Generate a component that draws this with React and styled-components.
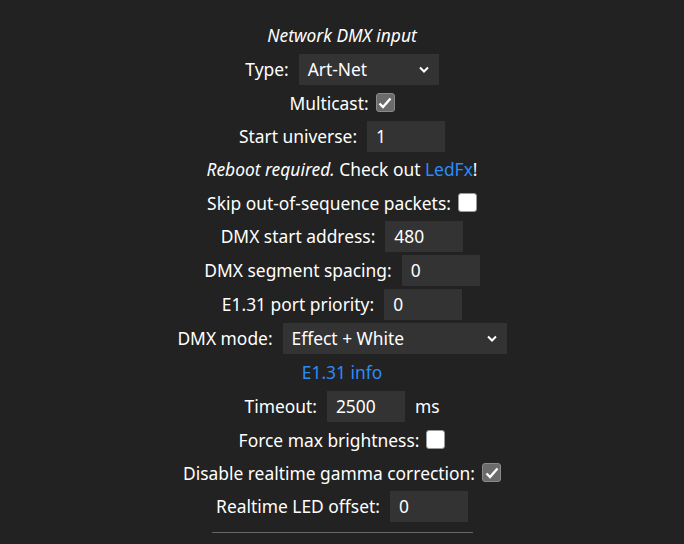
import React from 'react';
import styled, { createGlobalStyle } from 'styled-components';

const GlobalStyle = createGlobalStyle`
  body {
    margin: 0;
    background: #222;
    color: #fff;
    font-family: "Noto Sans", "DejaVu Sans", sans-serif;
    font-size: 17.4px;
  }
`;

const Page = styled.div`
  display: flex;
  flex-direction: column;
  align-items: center;
  padding-top: 19px;
  min-height: 544px;
  box-sizing: border-box;
`;

const Row = styled.div`
  display: flex;
  align-items: center;
  justify-content: center;
  gap: ${p => p.$gap || 10}px;
  height: ${p => p.$h || 34}px;
  white-space: nowrap;
`;

const TextLine = styled.div`
  height: ${p => p.$h || 33}px;
  line-height: ${p => p.$h || 33}px;
  white-space: nowrap;
  font-style: ${p => (p.$italic ? 'italic' : 'normal')};
`;

const Note = styled.span`
  font-style: italic;
`;

const Link = styled.a`
  color: #2b8cf8;
  text-decoration: none;
`;

const NumInput = styled.input`
  width: ${p => p.$w || 78}px;
  height: 31px;
  box-sizing: border-box;
  background: #333;
  color: #fff;
  border: 0;
  padding: 0 9px;
  font-family: inherit;
  font-size: 17.4px;
  outline: none;
`;

const SelectBox = styled.div`
  position: relative;
  width: ${p => p.$w}px;
  height: 31px;
  background: #333;
  display: flex;
  align-items: center;
  padding-left: 9px;
  box-sizing: border-box;
`;

const Chevron = styled.svg`
  position: absolute;
  right: 10px;
  top: 12px;
`;

const Check = styled.span`
  width: 19px;
  height: 19px;
  box-sizing: border-box;
  border-radius: 3px;
  border: 1px solid ${p => (p.$on ? '#8a8a8a' : '#9a9a9a')};
  background: ${p => (p.$on ? '#6b6b6b' : '#fff')};
  display: inline-flex;
  align-items: center;
  justify-content: center;
`;

const Rule = styled.hr`
  width: 261px;
  border: 0;
  border-top: 1px solid #666;
  margin: 9px 0 0;
`;

function Select({ w, value }) {
  return (
    <SelectBox $w={w}>
      {value}
      <Chevron width="10" height="7" viewBox="0 0 10 7">
        <path d="M1 1.5 L5 5.5 L9 1.5" fill="none" stroke="#fff" strokeWidth="2" />
      </Chevron>
    </SelectBox>
  );
}

function Box({ on }) {
  return (
    <Check $on={on}>
      {on && (
        <svg width="14" height="12" viewBox="0 0 14 12">
          <path d="M1.5 6.5 L5 10 L12.5 1.5" fill="none" stroke="#fff" strokeWidth="2.4" />
        </svg>
      )}
    </Check>
  );
}

export default function App() {
  return (
    <>
      <GlobalStyle />
      <Page>
        <TextLine $italic>Network DMX input</TextLine>
        <Row>Type: <Select w={140} value="Art-Net" /></Row>
        <Row $h={33} $gap={7}>Multicast: <Box on /></Row>
        <Row>Start universe: <NumInput defaultValue="1" /></Row>
        <TextLine>
          <Note>Reboot required.</Note> Check out <Link href="#">LedFx</Link>!
        </TextLine>
        <Row $h={33} $gap={7}>Skip out-of-sequence packets: <Box /></Row>
        <Row>DMX start address: <NumInput defaultValue="480" /></Row>
        <Row>DMX segment spacing: <NumInput defaultValue="0" /></Row>
        <Row>E1.31 port priority: <NumInput defaultValue="0" /></Row>
        <Row>DMX mode: <Select w={224} value="Effect + White" /></Row>
        <TextLine $h={34}><Link href="#">E1.31 info</Link></TextLine>
        <Row>Timeout: <NumInput defaultValue="2500" /> ms</Row>
        <Row $h={33} $gap={7}>Force max brightness: <Box /></Row>
        <Row $h={33} $gap={7}>Disable realtime gamma correction: <Box on /></Row>
        <Row>Realtime LED offset: <NumInput defaultValue="0" /></Row>
        <Rule />
      </Page>
    </>
  );
}
